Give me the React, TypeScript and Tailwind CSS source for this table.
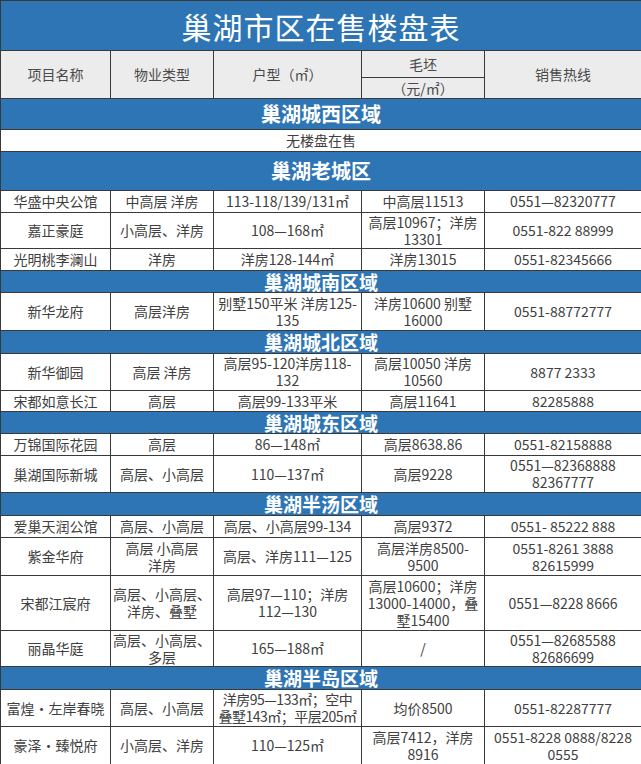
import React from "react";

type Row = { h: number; cells: React.ReactNode[] };
type Section = { title: string; h: number; rows: Row[]; big?: boolean };

const br = (a: string, b: string, c?: string) => (
  <>
    {a}
    <br />
    {b}
    {c !== undefined && (
      <>
        <br />
        {c}
      </>
    )}
  </>
);

const sections: Section[] = [
  {
    title: "巢湖城西区域",
    h: 31,
    big: true,
    rows: [],
  },
  {
    title: "巢湖老城区",
    h: 39,
    big: true,
    rows: [
      { h: 22, cells: ["华盛中央公馆", "中高层 洋房", "113-118/139/131㎡", "中高层11513", "0551—82320777"] },
      { h: 36, cells: ["嘉正豪庭", "小高层、洋房", "108—168㎡", br("高层10967；洋房", "13301"), "0551-822 88999"] },
      { h: 22, cells: ["光明桃李澜山", "洋房", "洋房128-144㎡", "洋房13015", "0551-82345666"] },
    ],
  },
  {
    title: "巢湖城南区域",
    h: 22,
    rows: [
      { h: 38, cells: ["新华龙府", "高层洋房", br("别墅150平米 洋房125-", "135"), br("洋房10600 别墅", "16000"), "0551-88772777"] },
    ],
  },
  {
    title: "巢湖城北区域",
    h: 23,
    rows: [
      { h: 37, cells: ["新华御园", "高层 洋房", br("高层95-120洋房118-", "132"), br("高层10050 洋房", "10560"), "8877 2333"] },
      { h: 21, cells: ["宋都如意长江", "高层", "高层99-133平米", "高层11641", "82285888"] },
    ],
  },
  {
    title: "巢湖城东区域",
    h: 22,
    rows: [
      { h: 22, cells: ["万锦国际花园", "高层", "86—148㎡", "高层8638.86", "0551-82158888"] },
      { h: 37, cells: ["巢湖国际新城", "高层、小高层", "110—137㎡", "高层9228", br("0551—82368888", "82367777")] },
    ],
  },
  {
    title: "巢湖半汤区域",
    h: 23,
    rows: [
      { h: 22, cells: ["爱巢天润公馆", "高层、小高层", "高层、小高层99-134", "高层9372", "0551- 85222 888"] },
      { h: 38, cells: ["紫金华府", br("高层 小高层", "洋房"), "高层、洋房111—125", br("高层洋房8500-", "9500"), br("0551-8261 3888", "82615999")] },
      { h: 55, cells: ["宋都江宸府", br("高层、小高层、", "洋房、叠墅"), br("高层97—110；洋房", "112—130"), br("高层10600；洋房", "13000-14000，叠", "墅15400"), "0551—8228 8666"] },
      { h: 36, cells: ["丽晶华庭", br("高层、小高层、", "多层"), "165—188㎡", "/", br("0551—82685588", "82686699")] },
    ],
  },
  {
    title: "巢湖半岛区域",
    h: 23,
    rows: [
      { h: 37, cells: ["富煌・左岸春晓", "高层、小高层", br("洋房95—133㎡；空中", "叠墅143㎡；平层205㎡"), "均价8500", "0551-82287777"] },
      { h: 38, cells: ["豪泽・臻悦府", "小高层、洋房", "110—125㎡", br("高层7412，洋房", "8916"), br("0551-8228 0888/8228", "0555")] },
    ],
  },
];

const cell = "border border-[#3a3a3a] text-center align-middle p-0 leading-[17px] whitespace-nowrap overflow-hidden";

export default function App() {
  return (
    <div className="w-[641px] h-[764px] overflow-hidden bg-white font-['Noto_Sans_CJK_SC',sans-serif] text-[14px] text-[#404040]">
      <table className="w-[641px] table-fixed border-collapse">
        <colgroup>
          <col className="w-[110px]" />
          <col className="w-[103px]" />
          <col className="w-[148px]" />
          <col className="w-[123px]" />
          <col className="w-[157px]" />
        </colgroup>
        <tbody>
          <tr className="h-[50px]">
            <td colSpan={5} className="border border-[#3a3a3a] bg-[#2e75b6] text-center align-middle p-0 text-white text-[30px] leading-[34px] tracking-[1px]">
              巢湖市区在售楼盘表
            </td>
          </tr>
          <tr className="h-[27px]">
            <td rowSpan={2} className={`${cell} bg-[#ececec] text-[#4a4a4a]`}>项目名称</td>
            <td rowSpan={2} className={`${cell} bg-[#ececec] text-[#4a4a4a]`}>物业类型</td>
            <td rowSpan={2} className={`${cell} bg-[#ececec] text-[#4a4a4a]`}>户型（㎡）</td>
            <td className={`${cell} bg-[#ececec] text-[#4a4a4a]`}>毛坯</td>
            <td rowSpan={2} className={`${cell} bg-[#ececec] text-[#4a4a4a]`}>销售热线</td>
          </tr>
          <tr className="h-[21px]">
            <td className={`${cell} bg-[#ececec] text-[#4a4a4a]`}>（元/㎡）</td>
          </tr>
          {sections.map((s, si) => (
            <React.Fragment key={si}>
              <tr style={{ height: s.h }}>
                <td
                  colSpan={5}
                  className={`border border-[#3a3a3a] bg-[#2e75b6] text-center align-middle p-0 text-white font-bold ${
                    s.big ? "text-[20px] leading-[22px]" : "text-[19px] leading-[20px]"
                  }`}
                >
                  {s.title}
                </td>
              </tr>
              {si === 0 && (
                <tr className="h-[22px]">
                  <td colSpan={5} className={cell}>
                    无楼盘在售
                  </td>
                </tr>
              )}
              {s.rows.map((r, ri) => (
                <tr key={ri} style={{ height: r.h }}>
                  {r.cells.map((c, ci) => (
                    <td key={ci} className={`${cell} ${ci === 2 && si === 6 && ri === 0 ? "tracking-[-0.5px]" : ""}`}>
                      {c}
                    </td>
                  ))}
                </tr>
              ))}
            </React.Fragment>
          ))}
        </tbody>
      </table>
    </div>
  );
}
